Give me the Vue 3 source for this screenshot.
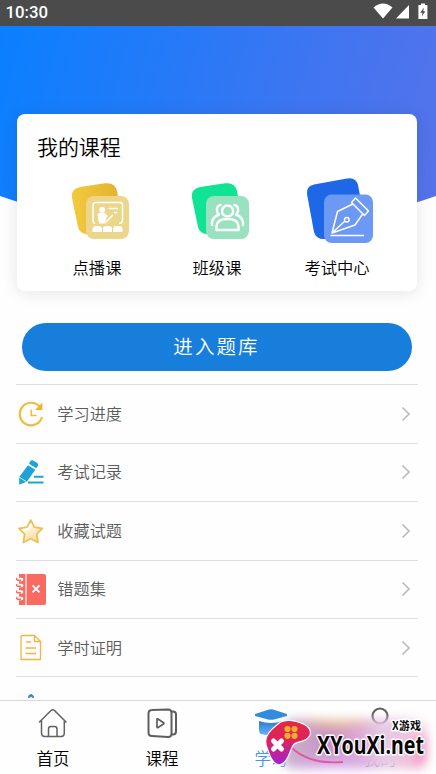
<script setup>
const courses = [
  { label: '点播课', kind: 'video' },
  { label: '班级课', kind: 'group' },
  { label: '考试中心', kind: 'exam' }
]
const rows = [
  { label: '学习进度', kind: 'clock' },
  { label: '考试记录', kind: 'pencil' },
  { label: '收藏试题', kind: 'star' },
  { label: '错题集', kind: 'book' },
  { label: '学时证明', kind: 'doc' },
  { label: '', kind: 'more' }
]
</script>

<template>
  <div class="screen">
    <header class="status">
      <span class="time">10:30</span>
      <svg class="status-icons" width="56" height="18" viewBox="0 0 56 18">
        <path d="M0.5 4.500Q10 -3.500 19.500 4.500L10 15.500Z" fill="#fff" />
        <path d="M36 2V15.500H23Z" fill="#fff" />
        <path d="M48 .5h4v1.600h2.400V16h-9V2.100H48Z" fill="#fff" />
        <path d="M50.900 4.500L47.300 9.800H49.500L48.700 13.500L52.300 8.300H50.200Z" fill="#4b4b4b" />
      </svg>
    </header>

    <main class="content">
      <div class="hero"></div>
      <section class="card">
        <h2>我的课程</h2>
        <div class="courses">
          <div v-for="c in courses" :key="c.kind" class="course">
            <svg v-if="c.kind === 'video'" width="80" height="76" viewBox="57 172 80 76">
              <defs>
                <linearGradient id="gold" x1="0" x2="1"><stop offset="0" stop-color="#f3ca3d" /><stop offset="1" stop-color="#e2b12e" /></linearGradient>
              </defs>
              <path d="M80 187L105 183.300Q115 182 117 191L123 224Q124 229 118 230L90 234Q80 235 78 227L72 198Q70.500 189 80 187Z" fill="url(#gold)" />
              <rect x="86" y="196" width="43" height="43" rx="8" fill="#ebd68a" />
              <g fill="none" stroke="#fff" stroke-width="1.500">
                <path d="M95 223.500Q93 223 93 220V205Q93 202.500 96 202.500H120Q122.500 202.500 122.500 205V220Q122.500 223.500 119 223.500" />
                <path d="M108.500 208.500H118M114 212.500H117M106 222L113 215" />
              </g>
              <g fill="#fff">
                <circle cx="102.200" cy="209.700" r="2.900" />
                <path d="M97.500 215Q97.500 212.500 101 212.500H104L108 216L106 218L105.500 223.500H99Z" />
                <path d="M92.500 232V229Q92.500 226 96 226H98.500Q102 226 102 229V232ZM103 232V229Q103 226 106 226H109Q112 226 112 229V232ZM113 232V229Q113 226 116 226H119Q122.500 226 122.500 229V232Z" />
              </g>
            </svg>
            <svg v-else-if="c.kind === 'group'" width="80" height="76" viewBox="177 172 80 76">
              <path d="M200 187L225 183.300Q235 182 237 191L243 224Q244 229 238 230L210 234Q200 235 198 227L192 198Q190.500 189 200 187Z" fill="#10e494" />
              <rect x="206" y="196" width="43" height="43" rx="8" fill="#99e2bf" />
              <g fill="none" stroke="#fff" stroke-width="2.500" stroke-linecap="round" stroke-linejoin="round">
                <circle cx="227.600" cy="211" r="5.600" />
                <path d="M216.500 230V226Q217 219 227.500 219T238.500 226V230Z" />
                <path d="M220.500 205Q216.500 206 217 210.500Q217 213 219 214.500Q213 217 212 222V225M234.500 205Q238.500 206 238 210.500Q238 213 236 214.500Q242 217 243 222V225" />
              </g>
            </svg>
            <svg v-else width="80" height="76" viewBox="297 172 80 76">
              <path d="M314 184.500L347 178.500Q356 177 358 185L366 228Q367 234 360 235L326 239Q316 240 314 232L307 194Q306 186 314 184.500Z" fill="#1e68e8" />
              <rect x="324" y="194.500" width="49" height="48.500" rx="7.500" fill="#6b99f3" />
              <g fill="none" stroke="#fff" stroke-width="1.500" stroke-linejoin="round">
                <path d="M355.500 198L368.500 211L364.500 215.500L351.500 202.500Z" />
                <path d="M353 204L337.500 211.500L332 233L355 225L363 213.500M333 232L345 221" />
                <circle cx="346.800" cy="219.700" r="2.300" />
                <path d="M330.500 235.500H364" />
              </g>
            </svg>
            <span>{{ c.label }}</span>
          </div>
        </div>
      </section>

      <button class="enter">进入题库</button>

      <ul class="list">
        <li v-for="r in rows" :key="r.kind">
          <svg class="row-icon" width="32" height="34" viewBox="0 0 32 34">
            <g v-if="r.kind === 'clock'" fill="none" stroke="#eebd3b" stroke-width="2">
              <path d="M23.500 9.500A11.300 11.300 0 1 0 26 20" stroke-width="2.200" />
              <path d="M26.300 5.500V13H19Z" fill="#eeb72b" stroke="none" />
              <path d="M15.200 12.500V18.500H20.500" stroke-width="1.500" />
            </g>
            <g v-else-if="r.kind === 'pencil'" fill="#1ca4d7">
              <path d="M16 5L20.500 7.500Q23 9 21.800 11L20.300 13.300L13 8.800L14.200 6.500Q15 5 16 5Z" />
              <path d="M12 10.300L19.300 14.800L11 26.500L3.200 29.800L3.200 22Z" />
              <path d="M18 21.700H27.500M12 27.500H27.500" stroke="#1ca4d7" stroke-width="2" />
              <path d="M3 22L10 26.500" stroke="#fff" stroke-width=".8" />
            </g>
            <g v-else-if="r.kind === 'star'">
              <defs>
                <linearGradient id="star-fill" x1="0" y1="0" x2=".6" y2="1"><stop offset=".48" stop-color="#fff" /><stop offset=".5" stop-color="#fff0d2" /><stop offset="1" stop-color="#fdda9f" /></linearGradient>
              </defs>
              <path d="M14.700 6L18.300 13.200L26.300 14.500L20.700 20.200L22 28.500L14.700 24.700L7.300 28.500L8.700 20.200L3 14.500L11.100 13.200Z" fill="url(#star-fill)" stroke="#ebc354" stroke-width="1.800" stroke-linejoin="round" />
            </g>
            <g v-else-if="r.kind === 'book'">
              <path d="M3 2H28Q30 2 30 4V31Q30 33 28 33H3Z" fill="#fb6a60" />
              <path d="M10 2V33" stroke="#fff" stroke-width="1.200" />
              <g v-for="y in [7.500, 13.500, 20, 26.500]" :key="y" fill="none">
                <path :d="`M1 ${y}H5.500`" stroke="#fff" stroke-width="3.600" stroke-linecap="round" />
                <path :d="`M1 ${y - 1.500}Q0 ${y + .8} 2 ${y + .8}H5`" stroke="#fb6a60" stroke-width="1.400" />
              </g>
              <path d="M16.500 13.400L23.500 20.400M23.500 13.400L16.500 20.400" stroke="#fff" stroke-width="2" />
            </g>
            <g v-else-if="r.kind === 'doc'" fill="none" stroke="#f3b541" stroke-width="1.300">
              <path d="M6 4.500H18.500L24.500 10.500V28.500H5V5.500Q5 4.500 6 4.500ZM18.500 4.500V10.500H24.500" stroke-linejoin="round" />
              <path d="M10 11H15M9.500 17H20M9.500 22.500H20" />
            </g>
            <path v-else d="M12.500 9Q13 6.300 15 5.800Q17 6.300 17.500 9M13.500 8.500L15 6L16.500 8.500" fill="none" stroke="#3180c9" stroke-width="1.400" />
          </svg>
          <span class="row-label">{{ r.label }}</span>
          <svg v-if="r.label" class="arrow" width="10" height="16" viewBox="0 0 10 16"><path d="M1.500 1.500L8 8L1.500 14.500" fill="none" stroke="#bcbcbc" stroke-width="1.700" /></svg>
        </li>
      </ul>
    </main>

    <nav class="tabs">
      <div class="tab">
        <svg width="32" height="32" viewBox="37 707 32 32" fill="none" stroke="#626262" stroke-width="1.500" stroke-linejoin="round" stroke-linecap="round">
          <path d="M39.500 722L51 710.500Q52.700 709 54.500 710.500L66 722M41.500 720.500V733Q41.500 736.500 45 736.500H61Q64.300 736.500 64.300 733V720.500M48.500 736V729Q48.500 726.500 51 726.500H54.500Q57 726.500 57 729V736" />
        </svg>
        <span>首页</span>
      </div>
      <div class="tab">
        <svg width="32" height="32" viewBox="146 707 32 32" fill="none" stroke="#5e5e5e" stroke-width="2" stroke-linejoin="round">
          <path d="M152 710L168 709.500Q171.500 709.500 171.500 713V733.500Q171.500 737 168 737L152 736Q148.500 736 148.500 732.500V713.500Q148.500 710 152 710ZM171.500 711.500H173Q176 711.500 176 714.500V731.500Q176 734.500 173 734.500H171.500" />
          <path d="M157 719.500V727Q157 728 158 727.500L163.500 724Q164.300 723.300 163.500 722.700L158 719Q157 718.500 157 719.500Z" stroke-width="1.700" />
        </svg>
        <span>课程</span>
      </div>
      <div class="tab active">
        <svg width="34" height="32" viewBox="255 707 34 32">
          <defs><linearGradient id="cap" x1="0" y1="0" x2="0" y2="1"><stop offset="0" stop-color="#2a7cd1" /><stop offset="1" stop-color="#66b1fa" /></linearGradient></defs>
          <path d="M256 714L270 709.500Q272 709 274 709.500L288 714V716L275 719.500Q272 720 269 719.500L256 716Z" fill="#318bde" />
          <path d="M260 721Q272 725 284 721V730Q274 737 262 734Q260 733 260 730Z" fill="url(#cap)" />
        </svg>
        <span>学习</span>
      </div>
      <div class="tab">
        <svg width="32" height="32" viewBox="365 707 32 32" fill="none" stroke="#5e5e5e" stroke-width="2.200"><circle cx="381" cy="716" r="7.500" /><path d="M374 728Q377 725.500 381 725.500" stroke-opacity=".3" /></svg>
        <span class="faded">我的</span>
      </div>
    </nav>

    <div class="watermark">
      <div class="haze"></div>
      <svg class="mark" width="176" height="74" viewBox="260 700 176 74">
        <path d="M291 747C302 758 318 764 343 762" fill="none" stroke="#e05b96" stroke-width="1.800" />
        <defs><linearGradient id="pad" x1="0" y1="0" x2="0" y2="1"><stop offset="0" stop-color="#e52845" /><stop offset=".45" stop-color="#dc235d" /><stop offset="1" stop-color="#a421d4" /></linearGradient></defs>
        <path d="M279 724C285 719 295 721 304 725C310 728 312 734 307 738C303 742 295 740 292 746C289 752 287 762 280 764C273 765 270 754 267 746C264 737 271 730 279 724Z" fill="url(#pad)" stroke="#fff" stroke-width="2.500" paint-order="stroke" />
        <path d="M273.500 741L281.500 749M281.500 741L273.500 749" stroke="#fff" stroke-width="5" stroke-linecap="round" />
        <g fill="#f5ad2b"><circle cx="287.500" cy="729" r="3.100" /><circle cx="294.500" cy="729" r="3.100" /><circle cx="287.500" cy="735.800" r="3.100" /><circle cx="294.500" cy="735.800" r="3.100" /></g>
        <g fill="#080808" stroke="#fff" stroke-width="3" paint-order="stroke" stroke-linejoin="round">
          <text class="cn" x="392" y="730" textLength="29">X游戏</text>
          <text class="url" x="317" y="754" textLength="107" lengthAdjust="spacingAndGlyphs">XYouXi.net</text>
        </g>
      </svg>
    </div>
  </div>
</template>

<style>
body { margin: 0; background: #fff; }
</style>

<style scoped>
.screen { position: relative; width: 436px; height: 774px; overflow: hidden; display: flex; flex-direction: column; background: #fefefe; font-family: "Noto Sans CJK SC", sans-serif; font-weight: 350; color: #000; }
.status { height: 26px; flex: none; box-sizing: border-box; display: flex; justify-content: space-between; align-items: center; padding: 0 7px 0 5.500px; background: #4b4b4b; color: #fff; }
.time { font: 500 16.800px/24px Roboto, sans-serif; margin-top: -2px; }
.status-icons { margin-top: -2px; }
.content { position: relative; flex: 1; min-height: 0; overflow: hidden; padding: 88px 18px 0 16px; }
.hero { position: absolute; inset: 0 0 auto; height: 210px; background: linear-gradient(105deg, #0a80ff 0%, #237af8 34%, #3f75f1 66%, #5673e9 100%); clip-path: circle(660px at 50% -453px); }
.card { position: relative; box-sizing: border-box; height: 177px; margin: 0 1px; padding: 17px 20px 0; border-radius: 8px; background: #fff; box-shadow: 0 2px 16px rgba(0, 0, 0, .1); }
h2 { margin: 0; font-size: 21px; line-height: 30px; font-weight: 350; letter-spacing: -.1px; }
.courses { display: grid; grid-template-columns: repeat(3, 1fr); margin-top: 11px; }
.course { display: flex; flex-direction: column; align-items: center; font-size: 16.300px; line-height: 24px; }
.course span { margin-top: 7px; }
.enter { display: block; width: 390px; height: 48px; margin: 32px 0 13.400px 6px; padding: 0 1px 3px 0; border: 0; border-radius: 24px; background: #187edb; color: #fff; font: 350 19.500px/44px "Noto Sans CJK SC", sans-serif; letter-spacing: 2.100px; }
.list { margin: 0; padding: 0; list-style: none; }
li { box-sizing: border-box; height: 58.400px; display: flex; align-items: center; border-top: 1px solid #dddfe3; color: #5c5c5c; font-size: 16.200px; line-height: 24px; }
.row-label { margin: -2px auto 0 9.300px; }
.arrow { margin-right: 7px; }
.tabs { box-sizing: border-box; height: 74px; flex: none; display: grid; grid-template-columns: repeat(4, 1fr); padding-top: 6px; border-top: 1px solid #d9d9d9; background: #fefefe; }
.tab { display: flex; flex-direction: column; align-items: center; font-size: 16.500px; line-height: 24px; margin-left: -3px; }
.tab span { margin-top: 7px; }
.active { color: #4795e8; }
.tab .faded { color: #777; }
.watermark { position: absolute; right: 0; bottom: 0; width: 176px; height: 74px; }
.haze { position: absolute; left: 22px; top: 19px; width: 145px; height: 50px; border-radius: 12px; filter: blur(5px); background: radial-gradient(ellipse 45px 15px at 37% 0, #f2d29a, transparent), radial-gradient(ellipse 28px 24px at 100% 0, #fff, transparent), radial-gradient(ellipse 55px 22px at 35% 100%, #dcb5f2, transparent), linear-gradient(90deg, #c9bccd, #c98dc6 32%, #dca5d4 52%, #e6cce6 68%, #efc2dc 88%, #f58fbd); }
.mark { position: absolute; left: 0; top: 0; }
.cn { font: 700 11px "Noto Sans CJK SC", sans-serif; }
.url { font: 700 24.500px "Noto Sans", sans-serif; }
</style>
